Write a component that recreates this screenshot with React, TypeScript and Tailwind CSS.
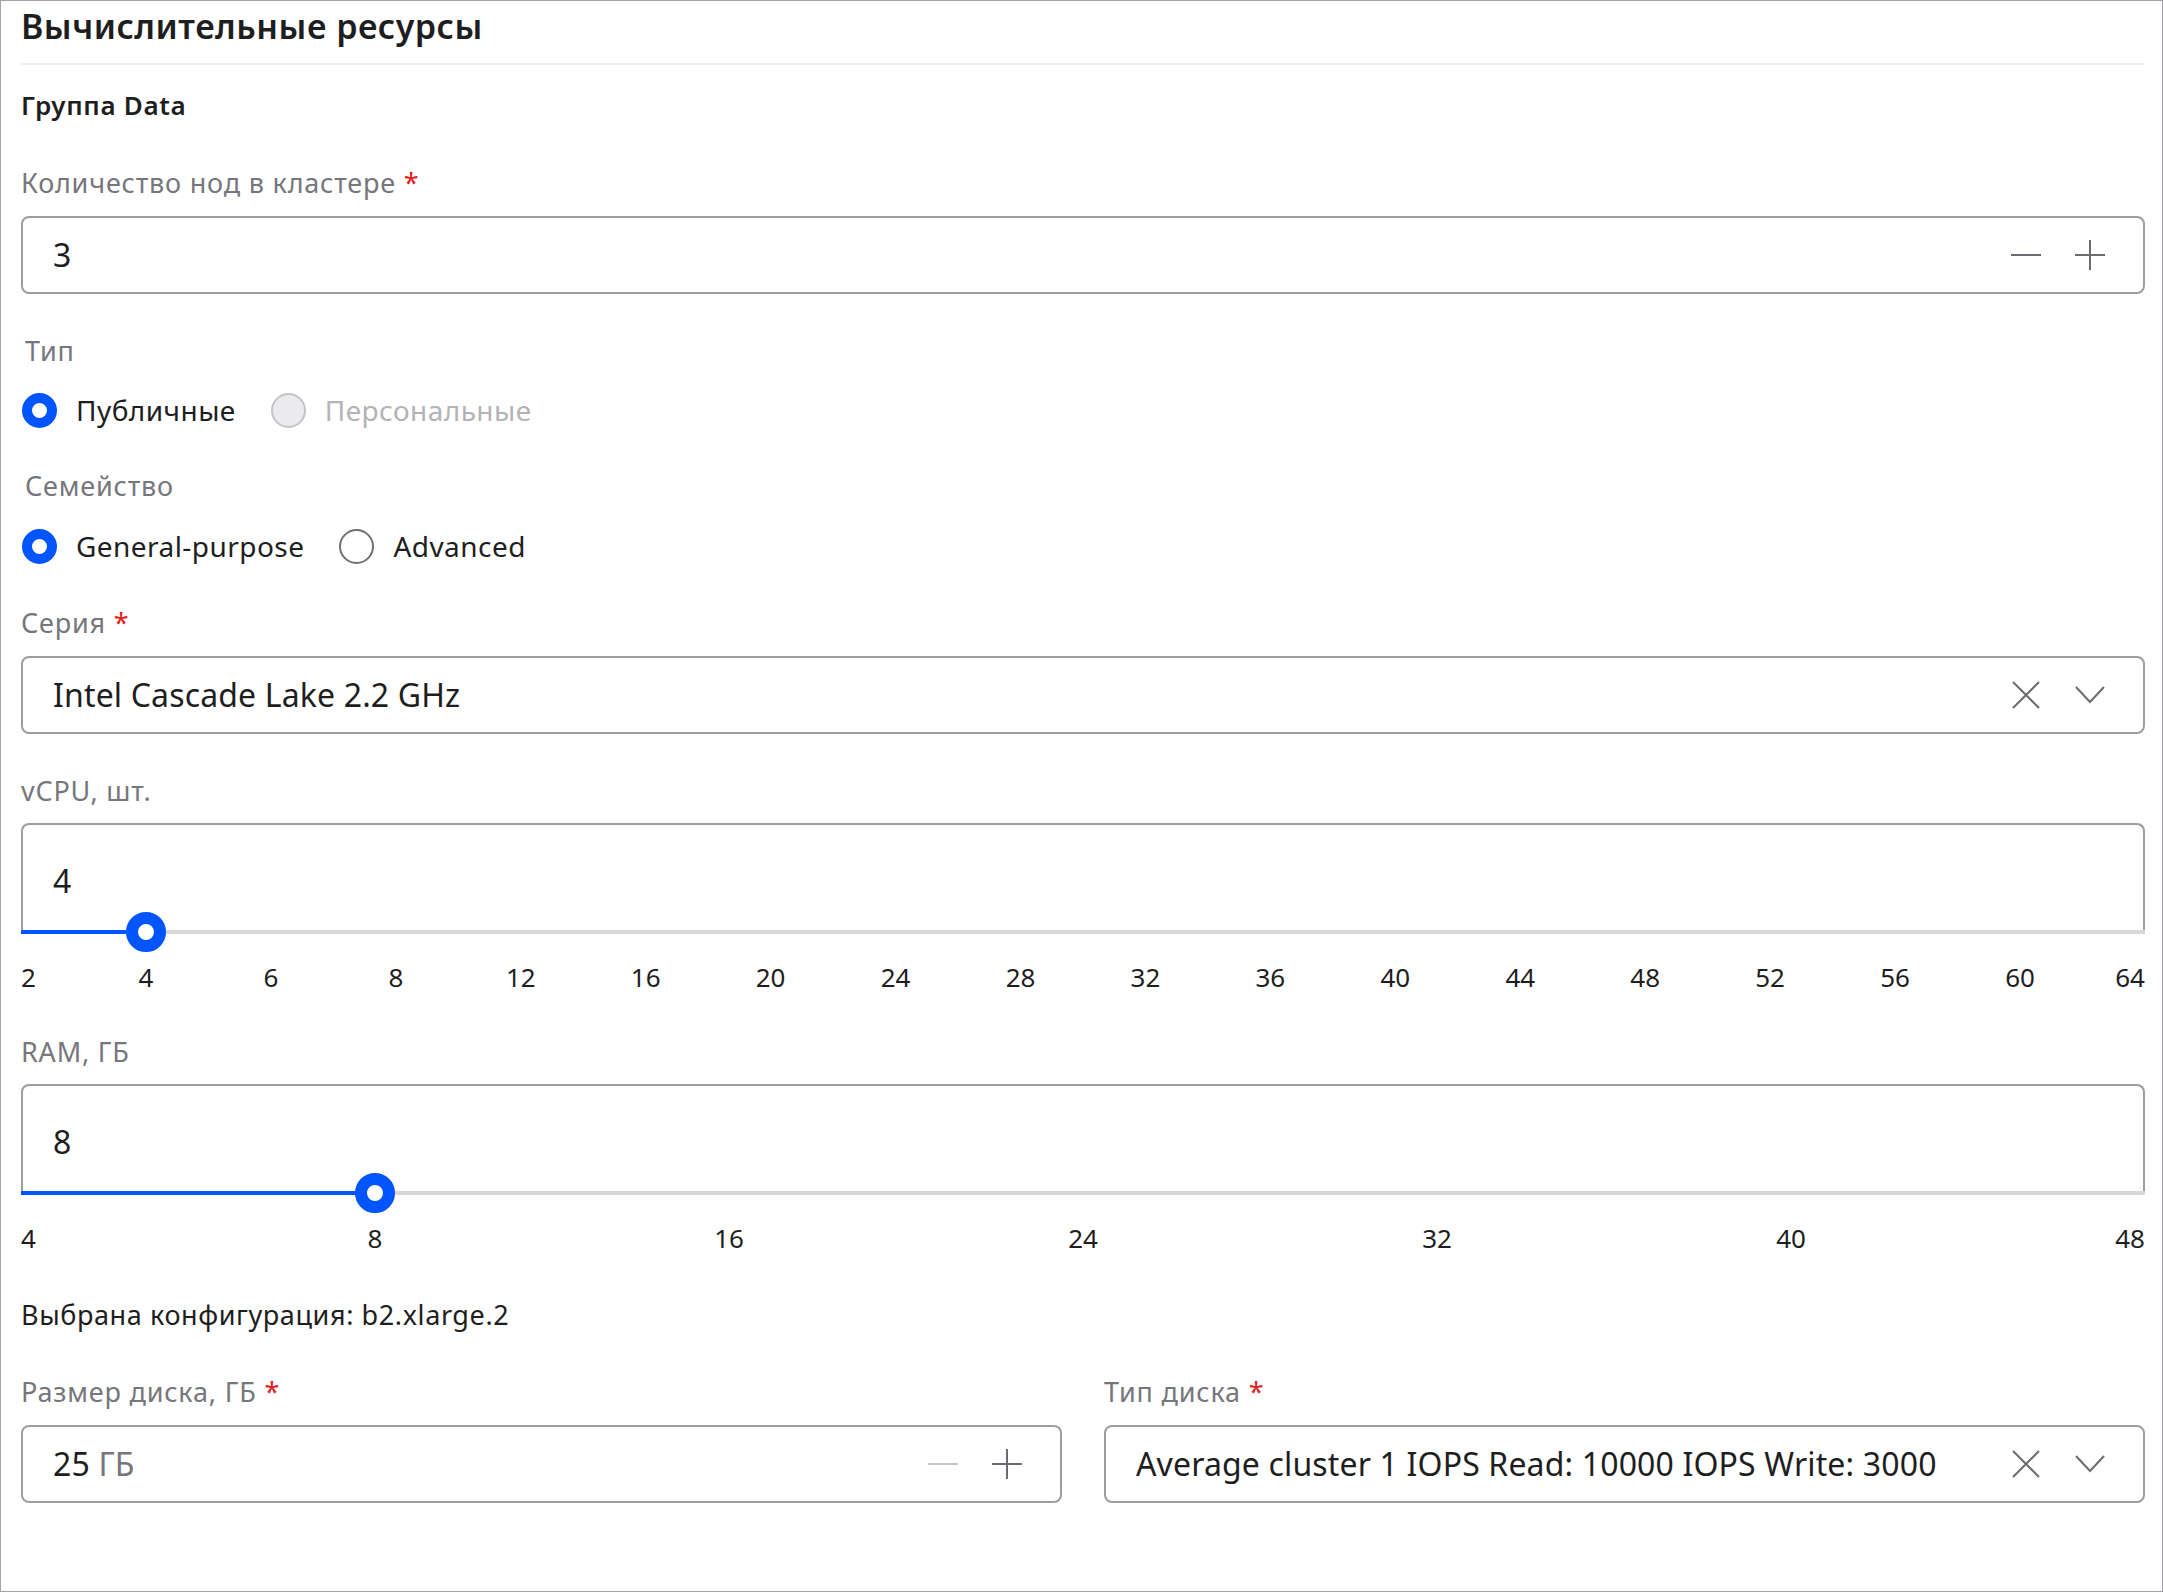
import { ReactNode } from "react";

const BLUE = "#0055ff";

const Label = ({ children, required }: { children: ReactNode; required?: boolean }) => (
  <div className="text-[27px] leading-[26px] tracking-[0.8px] text-[#76767c] whitespace-nowrap">
    {children}
    {required && <span className="text-[#e3201b]"> *</span>}
  </div>
);

const PlusIcon = ({ color = "#6b6b71" }: { color?: string }) => (
  <svg width="30" height="30" viewBox="0 0 30 30" fill="none">
    <path d="M15 0V30M0 15H30" stroke={color} strokeWidth="2" />
  </svg>
);

const MinusIcon = ({ color = "#6b6b71" }: { color?: string }) => (
  <svg width="30" height="30" viewBox="0 0 30 30" fill="none">
    <path d="M0 15H30" stroke={color} strokeWidth="2" />
  </svg>
);

const ClearIcon = () => (
  <svg width="30" height="30" viewBox="0 0 30 30" fill="none">
    <path d="M2 2L28 28M28 2L2 28" stroke="#6b6b71" strokeWidth="2" />
  </svg>
);

const ChevronIcon = () => (
  <svg width="30" height="30" viewBox="0 0 30 30" fill="none">
    <path d="M1 7L15 22L29 7" stroke="#6b6b71" strokeWidth="2" />
  </svg>
);

const Stepper = ({ value, suffix, minDisabled }: { value: string; suffix?: string; minDisabled?: boolean }) => (
  <div className="mt-[20px] flex h-[78px] items-center rounded-[8px] border-2 border-[#9c9ca1] pl-[30px] pr-[38px]">
    <div className="flex-1 text-[32px] leading-[40px] tracking-[0.15px] text-[#1e1e21]">
      {value}
      {suffix && <span className="text-[#76767c]"> {suffix}</span>}
    </div>
    <div className="flex items-center gap-[34px]">
      <MinusIcon color={minDisabled ? "#c6c6ca" : "#6b6b71"} />
      <PlusIcon />
    </div>
  </div>
);

const Select = ({ value, className = "" }: { value: string; className?: string }) => (
  <div className={`flex h-[78px] items-center rounded-[8px] border-2 border-[#9c9ca1] pl-[30px] pr-[38px] ${className}`}>
    <div className="flex-1 whitespace-nowrap text-[32px] leading-[40px] tracking-[0.15px] text-[#1e1e21]">{value}</div>
    <div className="flex items-center gap-[34px]">
      <ClearIcon />
      <ChevronIcon />
    </div>
  </div>
);

const Radio = ({ label, checked, disabled }: { label: string; checked?: boolean; disabled?: boolean }) => (
  <div className="flex items-center gap-[19px]">
    {checked ? (
      <span className="h-[35px] w-[35px] rounded-full border-[10px] border-[#0055ff] bg-white" />
    ) : disabled ? (
      <span className="h-[35px] w-[35px] rounded-full border-2 border-[#c4c4c8] bg-[#ebebed]" />
    ) : (
      <span className="h-[35px] w-[35px] rounded-full border-2 border-[#6f6f75] bg-white" />
    )}
    <span
      className={`text-[28px] leading-none tracking-[0.45px] ${disabled ? "text-[#b3b3b8]" : "text-[#1e1e21]"}`}
    >
      {label}
    </span>
  </div>
);

const Slider = ({ value, marks }: { value: number; marks: number[] }) => {
  const idx = marks.indexOf(value);
  const pct = (idx / (marks.length - 1)) * 100;
  return (
    <>
      <div className="relative mt-[19px] h-[111px] rounded-t-[8px] border-2 border-b-0 border-[#9c9ca1]">
        <div className="pl-[30px] pt-[40px] text-[32px] leading-[31px] text-[#1e1e21]">{value}</div>
        <div className="absolute -left-[2px] -right-[2px] bottom-0 h-[4px] bg-[#d7d7da]">
          <div className="h-full" style={{ width: `${pct}%`, backgroundColor: BLUE }} />
          <span
            className="absolute top-1/2 h-[40px] w-[40px] -translate-x-1/2 -translate-y-1/2 rounded-full border-[12px] border-[#0055ff] bg-white"
            style={{ left: `${pct}%` }}
          />
        </div>
      </div>
      <div className="mt-[30px] flex h-[26px] justify-between">
        {marks.map((m, i) => (
          <div
            key={m}
            className={`flex w-0 whitespace-nowrap text-[26px] leading-[26px] text-[#1e1e21] ${
              i === 0 ? "justify-start" : i === marks.length - 1 ? "justify-end" : "justify-center"
            }`}
          >
            {m}
          </div>
        ))}
      </div>
    </>
  );
};

export default function App() {
  return (
    <div className="h-screen overflow-hidden border border-[#a2a2a6] bg-white pl-[20px] pr-[17px] pt-[9px] font-['Noto_Sans',sans-serif]">
      <h1 className="text-[34px] font-semibold leading-[33px] tracking-[0.5px] text-[#1e1e21]">
        Вычислительные ресурсы
      </h1>
      <div className="mt-[20px] h-[2px] bg-[#f0f0f2]" />

      <div className="mt-[28px] text-[26px] font-semibold leading-[25px] tracking-[0.7px] text-[#1e1e21]">
        Группа Data
      </div>

      <div className="mt-[52px]">
        <Label required>Количество нод в кластере</Label>
      </div>
      <Stepper value="3" />

      <div className="mt-[44px] pl-[4px]">
        <Label>Тип</Label>
      </div>
      <div className="mt-[28px] flex h-[36px] items-center gap-[35px] pl-[1px]">
        <Radio label="Публичные" checked />
        <Radio label="Персональные" disabled />
      </div>

      <div className="mt-[45px] pl-[4px]">
        <Label>Семейство</Label>
      </div>
      <div className="mt-[29px] flex h-[36px] items-center gap-[35px] pl-[1px]">
        <Radio label="General-purpose" checked />
        <Radio label="Advanced" />
      </div>

      <div className="mt-[46px]">
        <Label required>Серия</Label>
      </div>
      <Select value="Intel Cascade Lake 2.2 GHz" className="mt-[20px]" />

      <div className="mt-[44px]">
        <Label>vCPU, шт.</Label>
      </div>
      <Slider value={4} marks={[2, 4, 6, 8, 12, 16, 20, 24, 28, 32, 36, 40, 44, 48, 52, 56, 60, 64]} />

      <div className="mt-[49px]">
        <Label>RAM, ГБ</Label>
      </div>
      <Slider value={8} marks={[4, 8, 16, 24, 32, 40, 48]} />

      <div className="mt-[51px] text-[27px] leading-[26px] tracking-[0.6px] text-[#1e1e21]">
        Выбрана конфигурация: b2.xlarge.2
      </div>

      <div className="mt-[51px] grid grid-cols-2 gap-x-[42px]">
        <div>
          <Label required>Размер диска, ГБ</Label>
          <Stepper value="25" suffix="ГБ" minDisabled />
        </div>
        <div>
          <Label required>Тип диска</Label>
          <Select value="Average cluster 1 IOPS Read: 10000 IOPS Write: 3000" className="mt-[20px]" />
        </div>
      </div>
    </div>
  );
}
